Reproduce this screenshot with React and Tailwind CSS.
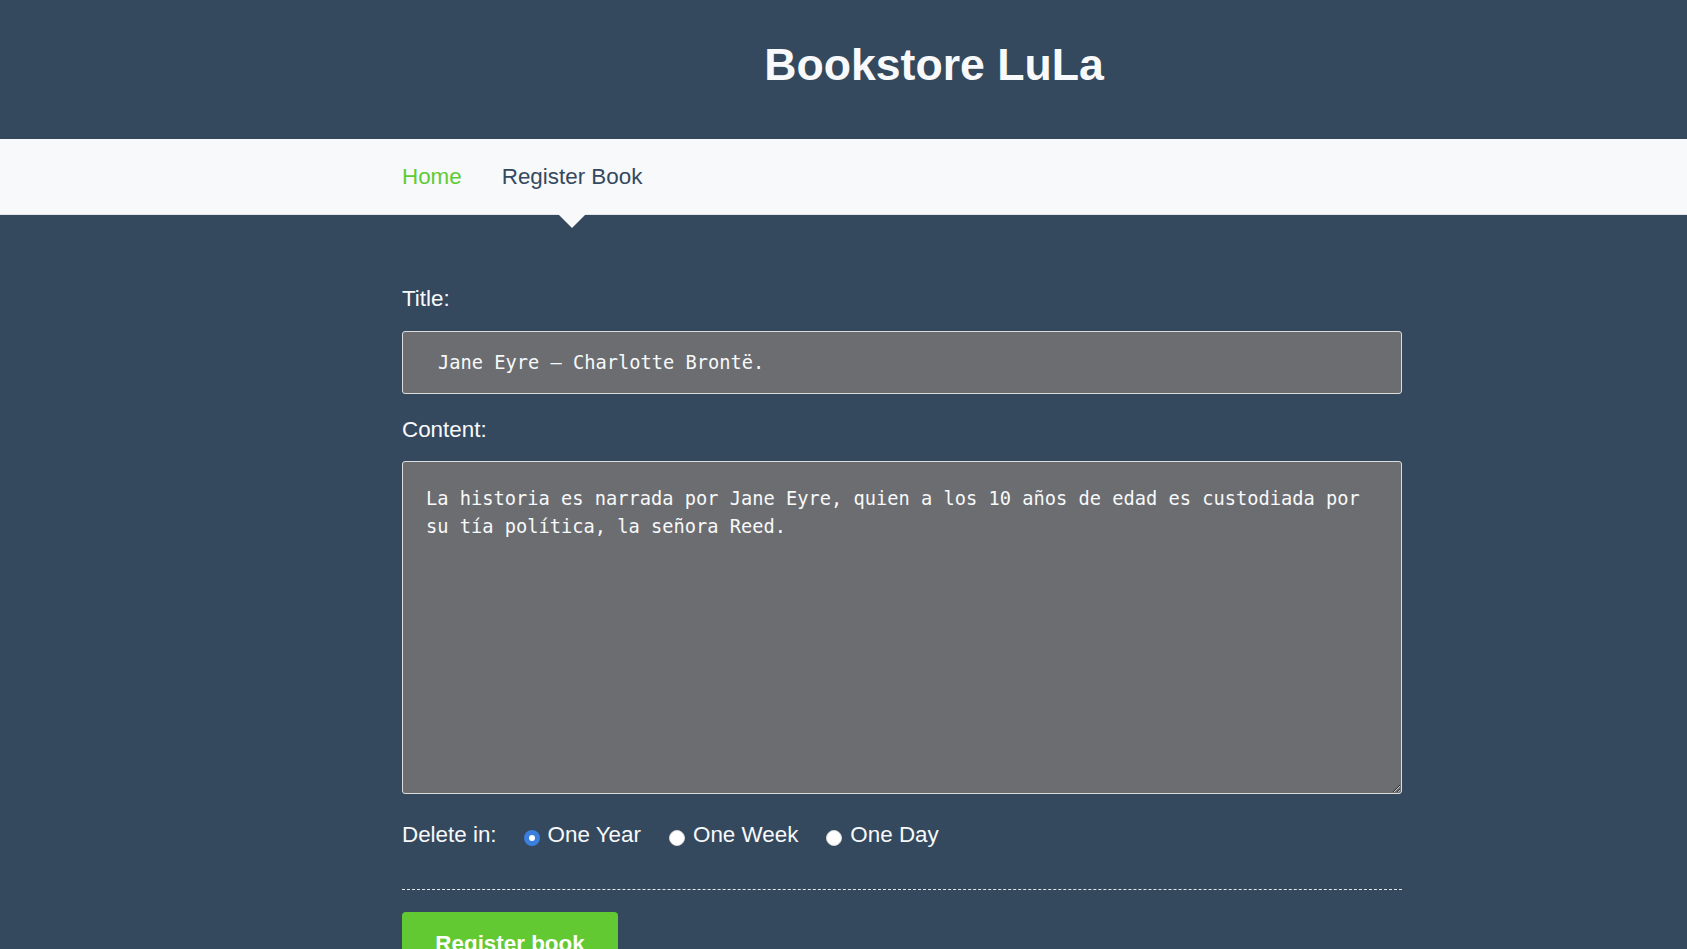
import React from "react";

const options = [
  { label: "One Year", checked: true, gap: "ml-[27px]" },
  { label: "One Week", checked: false, gap: "ml-[28px]" },
  { label: "One Day", checked: false, gap: "ml-[28px]" },
];

function Radio({ checked }) {
  return checked ? (
    <span className="mt-[6px] flex h-[16px] w-[16px] shrink-0 items-center justify-center rounded-full bg-[#3b7fdd]">
      <span className="h-[6px] w-[6px] rounded-full bg-white" />
    </span>
  ) : (
    <span className="mt-[6px] h-[16px] w-[16px] shrink-0 rounded-full border border-[#d9d9d9] bg-white" />
  );
}

export default function App() {
  return (
    <div className="min-h-screen bg-[#34495e] font-['Liberation_Sans',Arial,sans-serif]">
      {/* header */}
      <header className="flex h-[139px] items-center justify-center pb-[9px] pl-[181px]">
        <h1 className="text-[44.6px] font-bold text-[#f8f9fa]">Bookstore LuLa</h1>
      </header>

      {/* nav */}
      <nav className="flex h-[76px] items-stretch border-b border-[#e2e4e6] bg-[#f8f9fa] pl-[402px] text-[22.4px]">
        <a className="flex items-center text-[#5fcb35]">Home</a>
        <a className="relative ml-[40px] flex items-center text-[#34495e]">
          Register Book
          <span className="absolute left-1/2 top-full -ml-[14px] h-0 w-0 border-x-[14px] border-t-[14px] border-x-transparent border-t-[#f8f9fa]" />
        </a>
      </nav>

      {/* form */}
      <main className="w-[1000px] ml-[402px] text-[22.4px] text-[#f8f9fa]">
        <label className="mt-[68px] block leading-[32px]">Title:</label>
        <input
          defaultValue="Jane Eyre – Charlotte Brontë."
          className="mt-[16px] block h-[63px] w-full rounded-[3px] border border-[#dcdcdc] bg-[#6c6d71] pl-[35px] font-['DejaVu_Sans_Mono',monospace] text-[18.7px] text-[#f8f9fa] outline-none"
        />

        <label className="mt-[20px] block leading-[32px]">Content:</label>
        <textarea
          defaultValue="La historia es narrada por Jane Eyre, quien a los 10 años de edad es custodiada por su tía política, la señora Reed."
          className="mt-[15px] block h-[333px] w-full rounded-[3px] border border-[#dcdcdc] bg-[#6c6d71] p-[23px] font-['DejaVu_Sans_Mono',monospace] text-[18.7px] leading-[28px] text-[#f8f9fa] outline-none"
        />

        <div className="mt-[25px] flex h-[32px] items-center leading-[32px]">
          <span>Delete in:</span>
          {options.map((o) => (
            <label key={o.label} className={`flex items-center ${o.gap}`}>
              <Radio checked={o.checked} />
              <span className="ml-[8px]">{o.label}</span>
            </label>
          ))}
        </div>

        <div className="mt-[38px] border-t border-dashed border-[#e6e6e6]" />

        <button className="mt-[22px] h-[64px] w-[216px] rounded-[4px] bg-[#62c932] text-[22.4px] font-bold text-white">
          Register book
        </button>
      </main>
    </div>
  );
}
